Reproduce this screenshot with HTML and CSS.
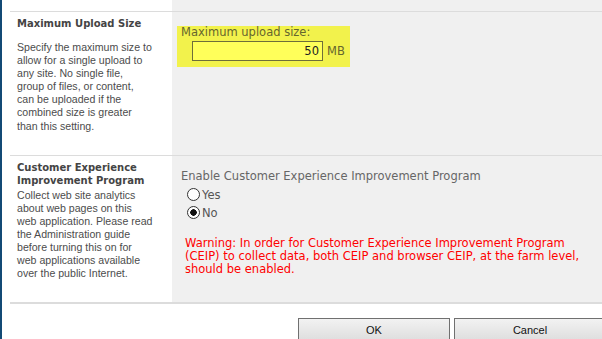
FILE: index.html
```
<!DOCTYPE html>
<html lang="en">
<head>
  <meta charset="UTF-8">
  <title>Web Application General Settings</title>
  <link rel="stylesheet" href="styles.css">
</head>
<body>

  <div class="form">
    <!-- Maximum upload size -->
    <div class="section upload">
      <div class="section-info">
        <h3>Maximum Upload Size</h3>
        <p>Specify the maximum size to allow for a single upload to any site. No single file, group of files, or content, can be uploaded if the combined size is greater than this setting.</p>
      </div>
      <div class="section-body">
        <div class="highlight">
          <label for="maxUpload">Maximum upload size:</label>
          <div class="upload-row">
            <input type="text" id="maxUpload" class="size-input" value="50">
            <span class="unit">MB</span>
          </div>
        </div>
      </div>
    </div>

    <!-- CEIP -->
    <div class="section ceip">
      <div class="section-info">
        <h3>Customer Experience Improvement Program</h3>
        <p>Collect web site analytics about web pages on this web application. Please read the Administration guide before turning this on for web applications available over the public Internet.</p>
      </div>
      <div class="section-body">
        <div class="field-label">Enable Customer Experience Improvement Program</div>
        <label class="radio-row"><input type="radio" name="ceip"> Yes</label>
        <label class="radio-row"><input type="radio" name="ceip" checked> No</label>
        <p class="warning">Warning: In order for Customer Experience Improvement Program (CEIP) to collect data, both CEIP and browser CEIP, at the farm level, should be enabled.</p>
      </div>
    </div>
  </div>

  <div class="buttons">
    <button>OK</button>
    <button>Cancel</button>
  </div>

</body>
</html>
```

FILE: styles.css
```
body {
  margin: 0;
  height: 339px;
  overflow: hidden;
  border-left: 2px solid #134a75;
  font-family: "DejaVu Sans", Verdana, sans-serif;
  font-size: 11.5px;
  color: #4c4c4c;
}
.form {
  margin-left: 8px;
  padding-top: 11px;
  background: linear-gradient(to right, #fff 162px, #f0f0f0 162px);
  border-bottom: 2px solid #dcdcdc;
}
.section {
  display: grid;
  grid-template-columns: 162px 1fr;
  border-top: 1px solid #dcdcdc;
}
.section-info {
  padding: 5px 0 22px 7px;
  font-family: "Liberation Sans", Tahoma, sans-serif;
  font-size: 10.6px;
}
.section-info h3 {
  margin: 0;
  font-family: "DejaVu Sans", Verdana, sans-serif;
  font-size: 10px;
  line-height: 13px;
  color: #444;
}
.section-info p {
  width: 137px;
  margin: 0;
  line-height: 13.1px;
}
.upload .section-info p {
  width: 135.5px;
  margin-top: 11px;
}
.ceip .section-info p {
  margin-top: 2px;
}
.section-body {
  padding-left: 5px;
  color: #666;
}
/* yellow highlighted field */
.highlight {
  margin-top: 14px;
  width: 166px;
  padding: 0 7px 6px 0;
  background-color: #f2f24c;
  color: #66662e;
}
.highlight label {
  display: block;
  padding-left: 4px;
  line-height: 13px;
}
.upload-row {
  display: flex;
  align-items: center;
  margin-top: 2px;
  padding-left: 15px;
}
.size-input {
  box-sizing: border-box;
  width: 131px;
  height: 20px;
  margin: 0;
  padding: 0 3px;
  border: 1px solid #6e6e3a;
  background-color: #ffff5a;
  font-family: inherit;
  font-size: 11.5px;
  color: #222;
  text-align: right;
}
.unit {
  margin-left: 4px;
}
.field-label {
  margin: 13px 0 3px;
  padding-left: 4px;
  line-height: 14px;
}
.radio-row {
  display: flex;
  align-items: center;
  height: 18px;
  padding-left: 10px;
  color: #555;
}
.radio-row input {
  appearance: none;
  width: 13px;
  height: 13px;
  margin: 0 2px 0 0;
  border: 1px solid #333;
  border-radius: 50%;
  background: #fff;
  box-sizing: border-box;
}
.radio-row input:checked {
  background: radial-gradient(circle, #111 0 3px, #fff 3.5px);
}
.warning {
  width: 410px;
  margin: 15px 0 0 8px;
  line-height: 13px;
  color: #f00;
}
.buttons {
  display: flex;
  gap: 4px;
  padding: 14px 0 0 296px;
}
button {
  flex: none;
  width: 152px;
  height: 24px;
  border: 1px solid #707070;
  background: linear-gradient(#f2f2f2, #dddddd);
  font-family: "Liberation Sans", Arial, sans-serif;
  font-size: 11px;
  color: #111;
}
```
